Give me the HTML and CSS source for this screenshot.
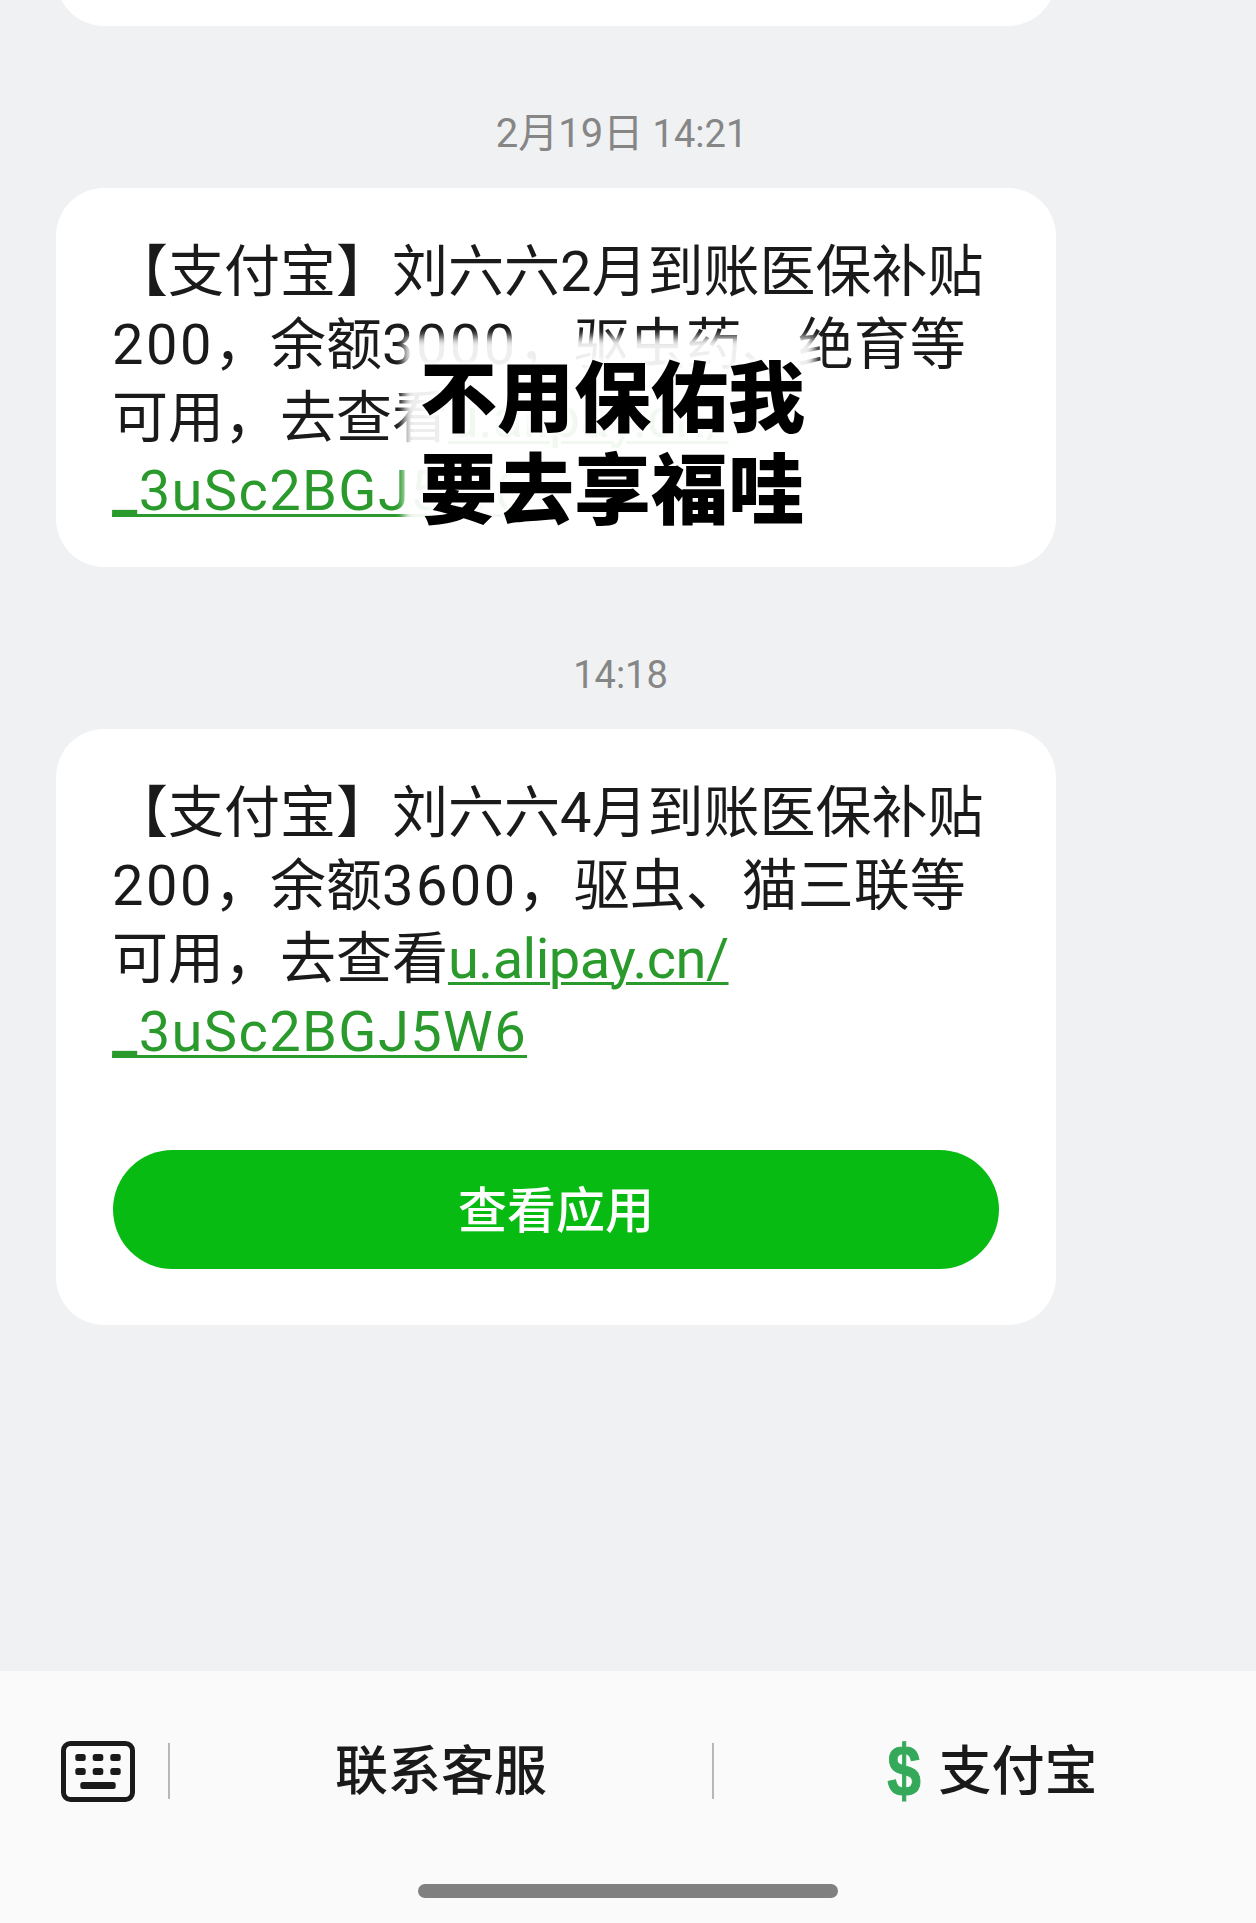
FILE: index.html
```html
<!DOCTYPE html>
<html lang="zh-CN">
<head>
<meta charset="utf-8">
<title>短信</title>
<link rel="stylesheet" href="styles.css">
</head>
<body>
<div class="screen">
  <main class="thread">
    <div class="card card-prev"></div>

    <div class="time time-dated"><span class="date">2月19日</span> 14:21</div>
    <article class="card card-first">
      <p class="msg">【支付宝】刘六六2月到账医保补贴<br><span class="num">200</span>，余额<span class="num">3000</span>，驱虫药、绝育等<br>可用，去查看<a class="link link-narrow">u.alipay.cn/</a><br><a class="link link-wide">_3uSc2BGJ5W6</a></p>
      <div class="stamp">不用保佑我<br>要去享福哇</div>
    </article>

    <div class="time">14:18</div>
    <article class="card">
      <p class="msg">【支付宝】刘六六4月到账医保补贴<br><span class="num">200</span>，余额<span class="num">3600</span>，驱虫、猫三联等<br>可用，去查看<a class="link link-narrow">u.alipay.cn/</a><br><a class="link link-wide">_3uSc2BGJ5W6</a></p>
      <button class="action">查看应用</button>
    </article>
  </main>

  <footer class="bar">
    <div class="menu">
      <div class="kbd">
        <svg class="kbd-icon" width="74" height="61" viewBox="0 0 74 61" aria-hidden="true">
          <rect x="2.5" y="2.5" width="69" height="56" rx="7" fill="none" stroke="#1a1a1a" stroke-width="5"/>
          <g fill="#1a1a1a">
            <rect x="14.3" y="13" width="10.4" height="7" rx="2.5"/>
            <rect x="31.7" y="13" width="10.6" height="7" rx="2.5"/>
            <rect x="49.3" y="13" width="10.4" height="7" rx="2.5"/>
            <rect x="14.3" y="27" width="10.4" height="7" rx="2.5"/>
            <rect x="31.7" y="27" width="10.6" height="7" rx="2.5"/>
            <rect x="49.3" y="27" width="10.4" height="7" rx="2.5"/>
            <rect x="19.3" y="41" width="35.4" height="7" rx="2.5"/>
          </g>
        </svg>
      </div>
      <div class="menu-item menu-service">联系客服</div>
      <div class="menu-item menu-brand"><span class="dollar">$</span>支付宝</div>
    </div>
    <div class="home"></div>
  </footer>
</div>
</body>
</html>
```

FILE: styles.css
```css
* {
  box-sizing: border-box;
}

html,
body {
  margin: 0;
  padding: 0;
}

body {
  background: #eff1f3;
  font-family: Roboto, "Noto Sans CJK SC", sans-serif;
  color: #1a1a1a;
}

.screen {
  display: flex;
  flex-direction: column;
  width: 1256px;
  height: 1923px;
  overflow: hidden;
}

.thread {
  flex: 1;
  min-height: 0;
  padding: 0 200px 0 56px;
}

.card {
  position: relative;
  width: 1000px;
  padding: 48px 56px 56px;
  background: #fff;
  border-radius: 48px;
}

.card-prev {
  height: 100px;
  margin-top: -74px;
  padding: 0;
}

.card-first {
  height: 379px;
}

.time {
  width: 1129px;
  height: 162px;
  padding-top: 83px;
  font-size: 38px;
  line-height: 50px;
  text-align: center;
  color: #868686;
}

.time-dated {
  padding-left: 2px;
}

.date {
  font-size: 40px;
}

.msg {
  margin: 0;
  font-size: 56px;
  line-height: 73px;
  white-space: nowrap;
}

.num {
  letter-spacing: 2.5px;
}

.link {
  color: #2a9a2c;
  text-decoration: underline;
  text-decoration-thickness: 3px;
  text-underline-offset: 4px;
}

.link-narrow {
  letter-spacing: -0.5px;
}

.link-wide {
  letter-spacing: 1.4px;
}

.action {
  display: block;
  width: 886px;
  height: 119px;
  margin: 81px 0 0 1px;
  padding: 0;
  border: 0;
  border-radius: 60px;
  background: #08bb13;
  color: #fff;
  font: 500 49px/124px Roboto, "Noto Sans CJK SC", sans-serif;
}

.stamp {
  position: absolute;
  top: 159px;
  left: 364px;
  z-index: 1;
  font-family: "Noto Sans CJK SC", sans-serif;
  font-size: 77px;
  font-weight: 900;
  line-height: 92px;
  color: #000;
  white-space: nowrap;
  text-shadow: 0 0 6px #fff, 0 0 6px #fff, 0 0 10px #fff;
}

.stamp::before {
  content: "";
  position: absolute;
  inset: -10px -10px -16px -16px;
  z-index: -1;
  background: rgba(255, 255, 255, 0.93);
  filter: blur(4px);
}

.bar {
  flex: none;
  height: 252px;
  padding-top: 69px;
  background: #fafafa;
}

.menu {
  display: flex;
  align-items: center;
  height: 62px;
}

.kbd {
  display: flex;
  flex: none;
  width: 170px;
  height: 56px;
  padding-left: 61px;
  align-items: center;
  border-right: 2px solid #b8b8b8;
}

.kbd-icon {
  flex: none;
}

.menu-item {
  display: flex;
  flex: none;
  align-items: center;
  justify-content: center;
  width: 544px;
  height: 56px;
  padding-top: 2px;
  font-size: 53px;
  font-weight: 500;
  line-height: 56px;
  color: #1a1a1a;
}

.menu-service {
  border-right: 2px solid #b8b8b8;
}

.menu-brand {
  width: 542px;
  padding-left: 12px;
}

.dollar {
  display: inline-block;
  margin: -2px 14px 0 0;
  font-family: "Liberation Sans", sans-serif;
  font-size: 72px;
  font-weight: 700;
  line-height: 56px;
  color: #35a95a;
  -webkit-text-stroke: 1px #35a95a;
  transform: scaleX(0.84);
}

.home {
  width: 420px;
  height: 14px;
  margin: 82px 0 0 418px;
  border-radius: 7px;
  background: #808080;
}
```
